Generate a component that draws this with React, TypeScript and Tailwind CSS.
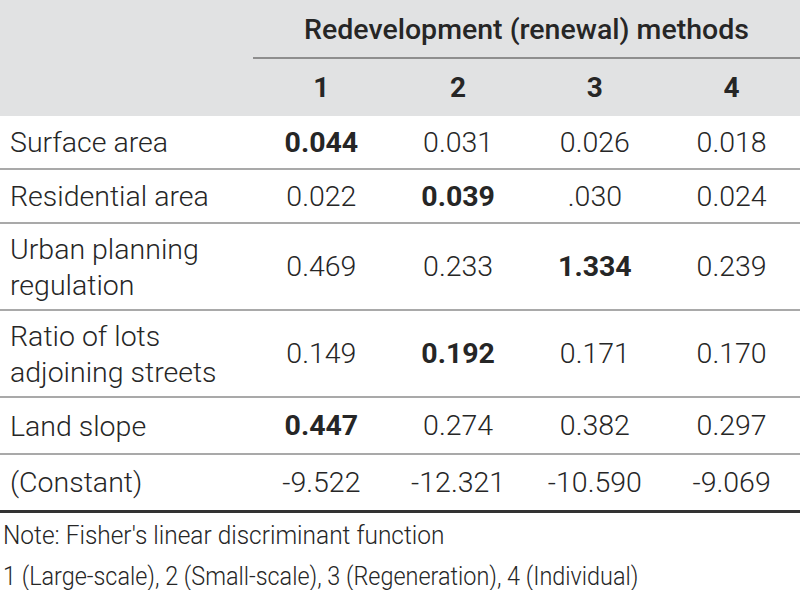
import React from "react";

type Row = {
  label: string[];
  values: string[];
  bold: number;
  h: string;
};

const ROWS: Row[] = [
  { label: ["Surface area"], values: ["0.044", "0.031", "0.026", "0.018"], bold: 0, h: "h-[53px]" },
  { label: ["Residential area"], values: ["0.022", "0.039", ".030", "0.024"], bold: 1, h: "h-[54px]" },
  { label: ["Urban planning", "regulation"], values: ["0.469", "0.233", "1.334", "0.239"], bold: 2, h: "h-[87px]" },
  { label: ["Ratio of lots", "adjoining streets"], values: ["0.149", "0.192", "0.171", "0.170"], bold: 1, h: "h-[87px]" },
  { label: ["Land slope"], values: ["0.447", "0.274", "0.382", "0.297"], bold: 0, h: "h-[57px]" },
  { label: ["(Constant)"], values: ["-9.522", "-12.321", "-10.590", "-9.069"], bold: -1, h: "h-[57px]" },
];

const App = () => {
  return (
    <div className="w-[800px] h-[590px] bg-white overflow-hidden text-[#262626] font-['Roboto',sans-serif]">
      <table className="w-full border-collapse table-fixed">
        <colgroup>
          <col className="w-[253px]" />
          <col />
          <col />
          <col />
          <col />
        </colgroup>
        <thead className="bg-[#e1e2e3]">
          <tr className="h-[58px]">
            <th className="p-0"></th>
            <th colSpan={4} className="p-0 pt-[3px] text-center text-[28.5px] font-medium border-b-2 border-[#8e8e8e]">
              Redevelopment (renewal) methods
            </th>
          </tr>
          <tr className="h-[58px]">
            <th className="p-0"></th>
            {["1", "2", "3", "4"].map((n) => (
              <th key={n} className="p-0 text-center text-[28px] font-bold">{n}</th>
            ))}
          </tr>
        </thead>
        <tbody>
          {ROWS.map((r, i) => (
            <tr
              key={i}
              className={`${r.h} ${i === ROWS.length - 1 ? "border-b-[3px] border-[#333333]" : "border-b-2 border-[#a9a9a9]"}`}
            >
              <td className="p-0 pl-[10px] pt-[2px] text-[28.5px] font-light leading-[36px]">
                {r.label.map((l) => (
                  <div key={l}>{l}</div>
                ))}
              </td>
              {r.values.map((v, j) => (
                <td
                  key={j}
                  className={`p-0 pt-[2px] text-center text-[28.5px] ${j === r.bold ? "font-bold" : "font-light"}`}
                >
                  {v}
                </td>
              ))}
            </tr>
          ))}
        </tbody>
      </table>
      <div className="pl-[3px] pt-[2px] text-[26px] font-light leading-[41px]">
        <div className="origin-left scale-x-[0.94] whitespace-nowrap">Note: Fisher's linear discriminant function</div>
        <div className="origin-left scale-x-[0.90] whitespace-nowrap">1 (Large-scale), 2 (Small-scale), 3 (Regeneration), 4 (Individual)</div>
      </div>
    </div>
  );
};

export default App;
